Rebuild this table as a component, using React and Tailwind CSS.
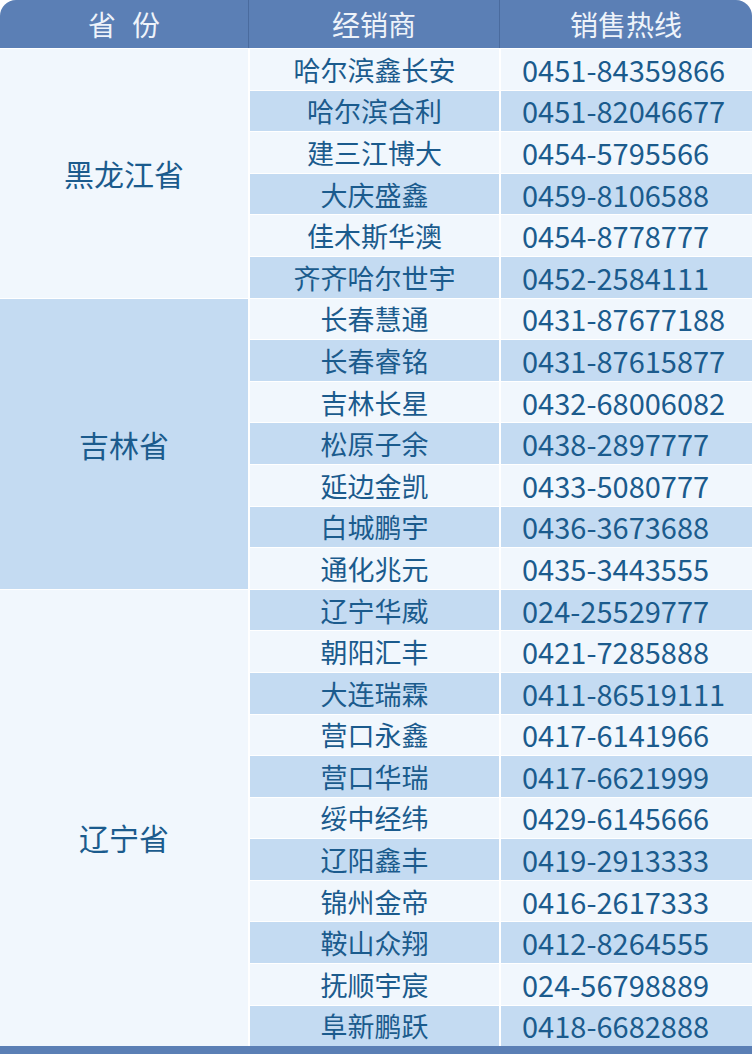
const dealers = [
  { province: "黑龙江省", offset: "", rows: [
    ["哈尔滨鑫长安", "0451-84359866"],
    ["哈尔滨合利", "0451-82046677"],
    ["建三江博大", "0454-5795566"],
    ["大庆盛鑫", "0459-8106588"],
    ["佳木斯华澳", "0454-8778777"],
    ["齐齐哈尔世宇", "0452-2584111"],
  ] },
  { province: "吉林省", offset: "", rows: [
    ["长春慧通", "0431-87677188"],
    ["长春睿铭", "0431-87615877"],
    ["吉林长星", "0432-68006082"],
    ["松原子余", "0438-2897777"],
    ["延边金凯", "0433-5080777"],
    ["白城鹏宇", "0436-3673688"],
    ["通化兆元", "0435-3443555"],
  ] },
  { province: "辽宁省", offset: "pt-[38px]", rows: [
    ["辽宁华威", "024-25529777"],
    ["朝阳汇丰", "0421-7285888"],
    ["大连瑞霖", "0411-86519111"],
    ["营口永鑫", "0417-6141966"],
    ["营口华瑞", "0417-6621999"],
    ["绥中经纬", "0429-6145666"],
    ["辽阳鑫丰", "0419-2913333"],
    ["锦州金帝", "0416-2617333"],
    ["鞍山众翔", "0412-8264555"],
    ["抚顺宇宸", "024-56798889"],
    ["阜新鹏跃", "0418-6682888"],
  ] },
];

const LIGHT = "bg-[#f1f7fd]";
const BLUE = "bg-[#c4dbf2]";

export default function App() {
  let index = 0;
  const cells = [];
  let rowStart = 1;

  dealers.forEach((group, g) => {
    const span = group.rows.length;
    cells.push(
      <div
        key={"p" + g}
        className={`flex items-center justify-center text-[30px] ${group.offset} ${g % 2 === 0 ? LIGHT : BLUE}`}
        style={{ gridColumn: 1, gridRow: `${rowStart} / span ${span}` }}
      >
        {group.province}
      </div>
    );
    group.rows.forEach(([name, phone], i) => {
      const bg = index % 2 === 0 ? LIGHT : BLUE;
      const row = rowStart + i;
      cells.push(
        <div
          key={"n" + index}
          className={`flex items-center justify-center text-[27px] ${bg}`}
          style={{ gridColumn: 2, gridRow: row }}
        >
          {name}
        </div>,
        <div
          key={"t" + index}
          className={`flex items-center pl-[21px] text-[29px] ${bg}`}
          style={{ gridColumn: 3, gridRow: row }}
        >
          {phone}
        </div>
      );
      index++;
    });
    rowStart += span;
  });

  return (
    <div
      className="w-[752px] h-[1063px] bg-white text-[#1b5b8d] leading-none"
      style={{ fontFamily: '"Noto Sans CJK SC", "Noto Sans", sans-serif' }}
    >
      {/* Header */}
      <div className="grid grid-cols-[249px_251px_252px] h-[48px] bg-[#5b7fb5] rounded-t-[16px] text-[28px] text-[#eef3fa]">
        <div className="flex items-center justify-center border-r border-[#4a6b9e]">
          省<span className="inline-block w-4" />份
        </div>
        <div className="flex items-center justify-center border-r border-[#4a6b9e]">
          经销商
        </div>
        <div className="flex items-center justify-center">销售热线</div>
      </div>

      {/* Body */}
      <div className="grid grid-cols-[248px_249px_251px] gap-x-[2px] gap-y-px auto-rows-[40.6px] pt-px">
        {cells}
      </div>

      {/* Bottom bar */}
      <div className="h-[8px] bg-[#5b7fb5]" />
    </div>
  );
}
